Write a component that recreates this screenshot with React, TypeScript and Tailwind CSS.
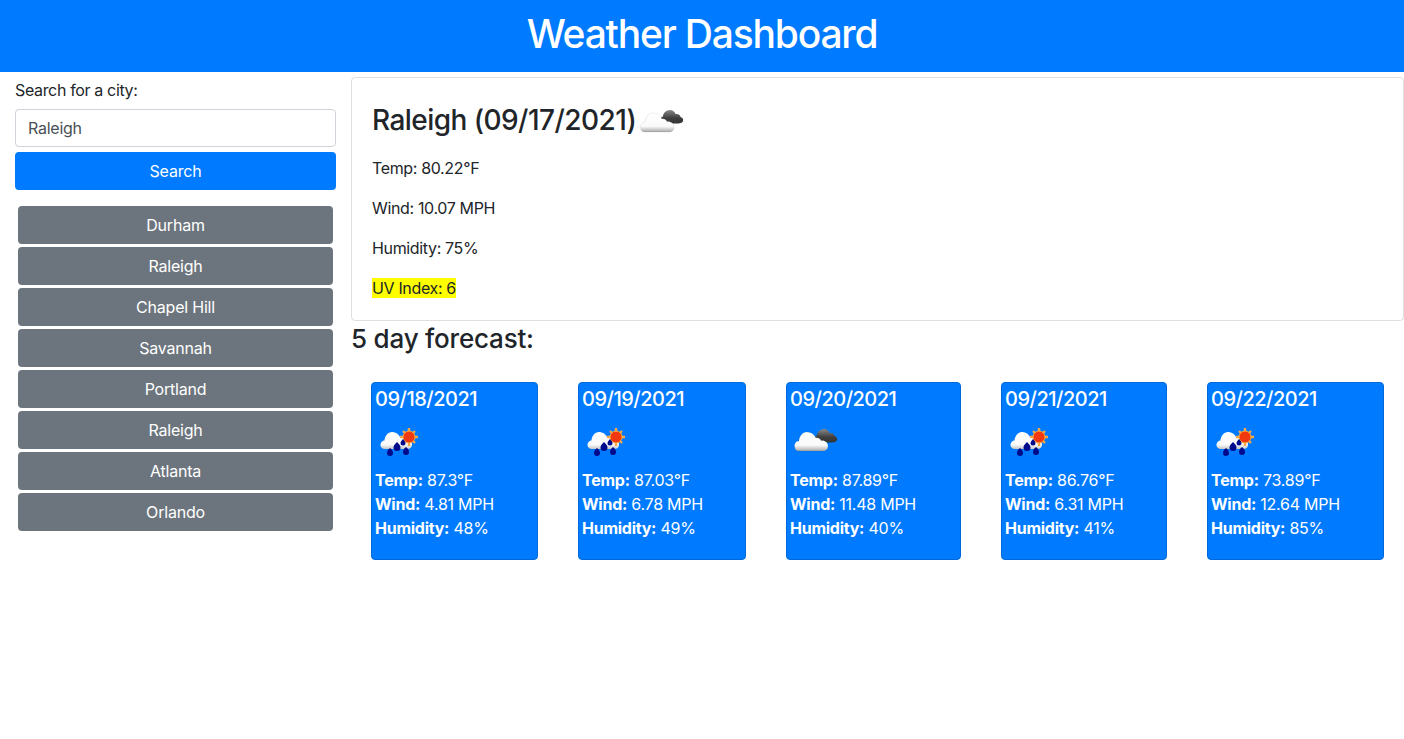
const cities = ['Durham', 'Raleigh', 'Chapel Hill', 'Savannah', 'Portland', 'Raleigh', 'Atlanta', 'Orlando']

const forecast = [
  { date: '09/18/2021', icon: 'rain', temp: '87.3', wind: '4.81', humidity: '48', width: 'w-[167px]' },
  { date: '09/19/2021', icon: 'rain', temp: '87.03', wind: '6.78', humidity: '49', width: 'w-[168px]' },
  { date: '09/20/2021', icon: 'cloud', temp: '87.89', wind: '11.48', humidity: '40', width: 'w-[175px]' },
  { date: '09/21/2021', icon: 'rain', temp: '86.76', wind: '6.31', humidity: '41', width: 'w-[166px]' },
  { date: '09/22/2021', icon: 'rain', temp: '73.89', wind: '12.64', humidity: '85', width: 'w-[177px]' },
]

function CloudIcon() {
  return (
    <svg viewBox="0 0 50 50" className="inline-block w-[50px] h-[50px] align-middle">
      <defs>
        <linearGradient id="darkCloud" x1="0" y1="0" x2="0" y2="1">
          <stop offset="0" stopColor="#8a8a8a" />
          <stop offset="0.6" stopColor="#3f3f3f" />
          <stop offset="1" stopColor="#333" />
        </linearGradient>
        <linearGradient id="whiteCloud" x1="0" y1="0" x2="0" y2="1">
          <stop offset="0" stopColor="#fff" />
          <stop offset="0.7" stopColor="#fafafa" />
          <stop offset="1" stopColor="#a8a8a8" />
        </linearGradient>
      </defs>
      <path
        d="M25 26c-2-3 0-5 2-5.500 0-4 4-7 8-6.500 2 .5 4 2 4.500 4 3-.5 5 1 5 3 2.500.5 3 2.500 2.500 4-.5 1.500-2 2.500-5 2.500H30c-2 0-4 0-5-1.500z"
        fill="url(#darkCloud)"
      />
      <path
        d="M9 36c-3 0-4.500-2-4.500-5s1.500-5 4.500-5c0-4 3-9 8-9 4 0 7 2 9 6 2-.5 4 .5 5 2.500 4-.5 7 2 7 5.500s-2 5-5 5z"
        fill="url(#whiteCloud)"
        stroke="#000"
        strokeOpacity="0.1"
        strokeWidth="0.8"
      />
    </svg>
  )
}

function RainIcon() {
  return (
    <svg viewBox="0 0 50 50" className="w-[50px] h-[50px]">
      <defs>
        <linearGradient id="rainCloud" x1="0" y1="0" x2="0" y2="1">
          <stop offset="0" stopColor="#fff" />
          <stop offset="0.75" stopColor="#fafafa" />
          <stop offset="1" stopColor="#c4c4c4" />
        </linearGradient>
      </defs>
      <path
        d="M10 34c-3 0-4.500-2-4.500-4s1.500-4.500 4-4.500c0-3 2.500-8 7-8.500 4-.5 7 2 8.500 5 2-.5 4 .5 5 2.500 3-.5 7 1 7 5 0 3-2 4.500-5 4.500z"
        fill="url(#rainCloud)"
      />
      <g stroke="#f9a64a" strokeWidth="2.4">
        <path d="M34 13v18M25 22h18M28 16l12 12M40 16L28 28" />
      </g>
      <circle cx="34" cy="22" r="6" fill="#f2380f" stroke="#fab03c" strokeWidth="1" />
      <g fill="#000a8c">
        <path d="M15 33c2 2 3 3 3 5a3 3 0 0 1-6 0c0-2 1-3 3-5z" />
        <path d="M22 27c2 2 3.500 3.500 3.500 5.500a3.500 3.500 0 0 1-7 0c0-2 1.500-3.500 3.500-5.500z" />
        <path d="M31 32c2 2 3 3 3 5a3 3 0 0 1-6 0c0-2 1-3 3-5z" />
        <path d="M28 24c1 1.500 2.500 2.500 2.500 4a2.500 2.500 0 0 1-5 0c0-1.500 1.500-2.500 2.500-4z" />
      </g>
    </svg>
  )
}

export default function App() {
  return (
    <div className="min-h-[739px] bg-white text-[#212529] text-base leading-6 font-['Inter',_'Liberation_Sans',_sans-serif]">
      <header className="h-[72px] bg-[#007bff] flex items-center justify-center pb-1">
        <h1 className="text-[39px] leading-[48px] font-medium text-white tracking-[-1.2px]">Weather Dashboard</h1>
      </header>

      <div className="flex">
        <aside className="w-[351px] shrink-0 px-[15px] pt-[6px]">
          <label className="block mb-[7px] tracking-[-0.35px]">Search for a city:</label>
          <input
            readOnly
            value="Raleigh"
            className="block w-full h-[38px] px-3 border border-[#ced4da] rounded text-[#495057] tracking-[-0.25px] outline-none"
          />
          <button className="block w-full h-[38px] mt-[5px] bg-[#007bff] text-white rounded tracking-[-0.2px]">Search</button>
          <div className="mt-[16px] px-[3px] flex flex-col gap-[3px]">
            {cities.map((city, i) => (
              <button key={i} className="h-[38px] bg-[#6c757d] text-white rounded tracking-[-0.2px]">
                {city}
              </button>
            ))}
          </div>
        </aside>

        <main className="flex-1 min-w-0 pt-[5px]">
          <section className="h-[244px] border border-black/[.125] rounded px-5 pt-[17px]">
            <h3 className="flex items-center h-[50px] mb-[11px] text-[28px] leading-[34px] font-medium tracking-[-0.55px]">
              Raleigh (09/17/2021)
              <span className="mt-[2px]">
                <CloudIcon />
              </span>
            </h3>
            <p className="mb-4 tracking-[-0.35px]">Temp: 80.22°F</p>
            <p className="mb-4 tracking-[-0.35px]">Wind: 10.07 MPH</p>
            <p className="mb-4 tracking-[-0.35px]">Humidity: 75%</p>
            <p className="tracking-[-0.35px]">
              <span className="bg-[#ffff00]">UV Index: 6</span>
            </p>
          </section>

          <h3 className="h-[35px] text-[26px] leading-[36px] font-medium tracking-[-0.2px]">5 day forecast:</h3>

          <div className="flex justify-around mt-[26px]">
            {forecast.map((day) => (
              <div
                key={day.date}
                className={`${day.width} h-[178px] bg-[#007bff] border border-[#0069d9] rounded text-white pl-[3px] pt-[4px] tracking-[-0.25px]`}
              >
                <div className="text-[20px] leading-6 font-medium tracking-[-0.5px]">{day.date}</div>
                <div className="h-[50px] mt-[4px] mb-[3px]">{day.icon === 'rain' ? <RainIcon /> : <CloudIcon />}</div>
                <div>
                  <b>Temp:</b> {day.temp}°F
                </div>
                <div>
                  <b>Wind:</b> {day.wind} MPH
                </div>
                <div>
                  <b>Humidity:</b> {day.humidity}%
                </div>
              </div>
            ))}
          </div>
        </main>
      </div>
    </div>
  )
}
